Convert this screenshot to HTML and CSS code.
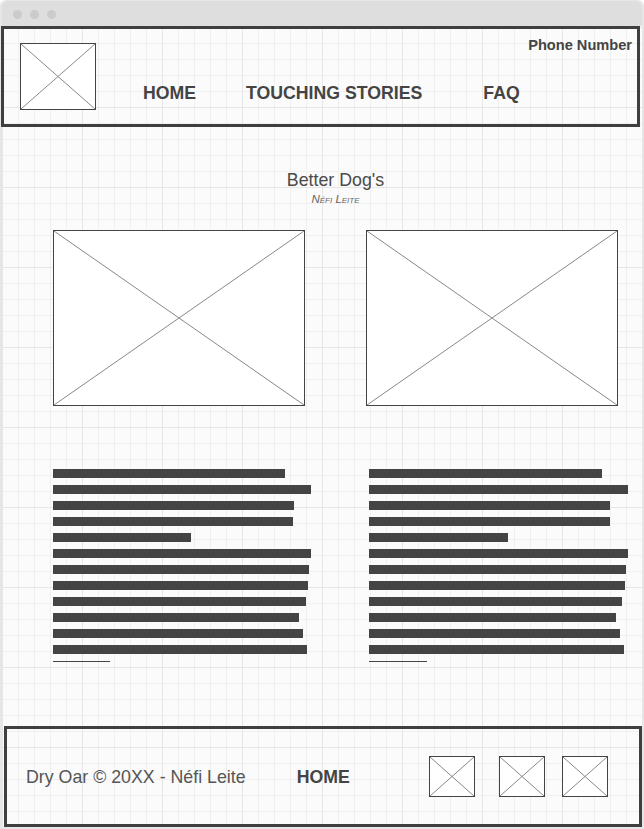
FILE: index.html
```html
<!DOCTYPE html>
<html>
  <head>
    <meta charset="UTF-8" />
    <title>Better Dog's</title>
    <link rel="stylesheet" href="styles.css">
  </head>
  <body>
    <div class="window">
      <div class="titlebar">
        <span class="dot"></span>
        <span class="dot"></span>
        <span class="dot"></span>
      </div>
      <div class="canvas">
        <div class="head">
          <svg class="ph logo" viewBox="0 0 100 100" preserveAspectRatio="none">
            <line x1="0" y1="0" x2="100" y2="100"></line>
            <line x1="100" y1="0" x2="0" y2="100"></line>
          </svg>
          <nav class="nav">
            <a href="#">HOME</a>
            <a href="#" class="stories">TOUCHING STORIES</a>
            <a href="#" class="faq">FAQ</a>
          </nav>
          <span class="phone">Phone Number</span>
        </div>

        <div class="main">
          <h1 class="title">Better Dog's</h1>
          <div class="author">Néfi Leite</div>

          <div class="pictures">
            <svg class="ph" viewBox="0 0 100 100" preserveAspectRatio="none">
              <line x1="0" y1="0" x2="100" y2="100"></line>
              <line x1="100" y1="0" x2="0" y2="100"></line>
            </svg>
            <svg class="ph" viewBox="0 0 100 100" preserveAspectRatio="none">
              <line x1="0" y1="0" x2="100" y2="100"></line>
              <line x1="100" y1="0" x2="0" y2="100"></line>
            </svg>
          </div>

          <div class="texts">
            <div class="lines">
              <span class="bar" style="width: 232px"></span>
              <span class="bar" style="width: 258px"></span>
              <span class="bar" style="width: 241px"></span>
              <span class="bar" style="width: 240px"></span>
              <span class="bar" style="width: 138px"></span>
              <span class="bar" style="width: 258px"></span>
              <span class="bar" style="width: 256px"></span>
              <span class="bar" style="width: 255px"></span>
              <span class="bar" style="width: 253px"></span>
              <span class="bar" style="width: 246px"></span>
              <span class="bar" style="width: 250px"></span>
              <span class="bar" style="width: 254px"></span>
              <span class="rule" style="width: 57px"></span>
            </div>
            <div class="lines right">
              <span class="bar" style="width: 233px"></span>
              <span class="bar" style="width: 259px"></span>
              <span class="bar" style="width: 241px"></span>
              <span class="bar" style="width: 241px"></span>
              <span class="bar" style="width: 139px"></span>
              <span class="bar" style="width: 259px"></span>
              <span class="bar" style="width: 257px"></span>
              <span class="bar" style="width: 256px"></span>
              <span class="bar" style="width: 253px"></span>
              <span class="bar" style="width: 247px"></span>
              <span class="bar" style="width: 251px"></span>
              <span class="bar" style="width: 255px"></span>
              <span class="rule" style="width: 58px"></span>
            </div>
          </div>
        </div>

        <div class="foot">
          <span class="copy">Dry Oar © 20XX - Néfi Leite</span>
          <a href="#" class="foot-home">HOME</a>
          <svg class="ph social first" viewBox="0 0 100 100" preserveAspectRatio="none">
            <line x1="0" y1="0" x2="100" y2="100"></line>
            <line x1="100" y1="0" x2="0" y2="100"></line>
          </svg>
          <svg class="ph social second" viewBox="0 0 100 100" preserveAspectRatio="none">
            <line x1="0" y1="0" x2="100" y2="100"></line>
            <line x1="100" y1="0" x2="0" y2="100"></line>
          </svg>
          <svg class="ph social third" viewBox="0 0 100 100" preserveAspectRatio="none">
            <line x1="0" y1="0" x2="100" y2="100"></line>
            <line x1="100" y1="0" x2="0" y2="100"></line>
          </svg>
        </div>
      </div>
    </div>
  </body>
</html>
```

FILE: styles.css
```css
:root {
  --ink: #444;
  --frame: #e6e6e6;
  --box: #3f3f3f;
  --grid-minor: #f0f0f0;
  --grid-major: #e6e6e6;
}

* {
  box-sizing: border-box;
}

body {
  margin: 0;
  background: #fff;
  font-family: "Liberation Sans", Arial, sans-serif;
  color: var(--ink);
}

a {
  color: var(--ink);
  text-decoration: none;
}

.window {
  width: 644px;
  height: 829px;
  border: 2px solid var(--frame);
  border-top-width: 1px;
  border-radius: 6px 6px 0 0;
  display: flex;
  flex-direction: column;
}

.titlebar {
  height: 25px;
  background: #dedede;
  border-radius: 5px 5px 0 0;
  display: flex;
  align-items: center;
  gap: 8px;
  padding: 2px 0 0 11px;
  flex-shrink: 0;
}

.dot {
  width: 9px;
  height: 9px;
  border-radius: 50%;
  background: #cbcbcb;
}

.canvas {
  flex: 1;
  display: flex;
  flex-direction: column;
  background-color: #fbfbfb;
  background-image:
    linear-gradient(var(--grid-major) 1px, transparent 1px),
    linear-gradient(90deg, var(--grid-major) 1px, transparent 1px),
    linear-gradient(var(--grid-minor) 1px, transparent 1px),
    linear-gradient(90deg, var(--grid-minor) 1px, transparent 1px);
  background-size: 80px 80px, 80px 80px, 16px 16px, 16px 16px;
  background-position: 0 1px;
}

/* placeholder boxes with a cross */
.ph {
  display: block;
  background: #fff;
  border: 1px solid #444;
  flex-shrink: 0;
}

.ph line {
  stroke: #888;
  stroke-width: 1;
  vector-effect: non-scaling-stroke;
}

.head {
  height: 101px;
  width: 639px;
  margin-left: -1px;
  border: 3px solid var(--box);
  display: flex;
  align-items: flex-start;
  flex-shrink: 0;
}

.logo {
  width: 76px;
  height: 67px;
  margin: 14px 0 0 16px;
}

.nav {
  display: flex;
  margin: 54px 0 0 47px;
}

.nav a {
  font-size: 17.7px;
  line-height: 20px;
  font-weight: bold;
}

.nav .stories {
  margin-left: 50px;
}

.nav .faq {
  margin-left: 61px;
}

.phone {
  margin: 8px 5px 0 auto;
  font-size: 14.6px;
  line-height: 16px;
  font-weight: bold;
}

.main {
  flex: 1;
  width: 565px;
  margin-left: 51px;
  padding-top: 43px;
}

.title {
  margin: 0;
  text-align: center;
  font-size: 17.8px;
  line-height: 20px;
  font-weight: normal;
  color: #4a4a4a;
}

.author {
  margin-top: 3px;
  text-align: center;
  font-size: 11.5px;
  line-height: 12px;
  font-style: italic;
  font-variant: small-caps;
  color: #666;
}

.pictures {
  margin-top: 25px;
  display: grid;
  grid-template-columns: 252px 252px;
  column-gap: 61px;
}

.pictures .ph {
  width: 252px;
  height: 176px;
}

.texts {
  margin-top: 63px;
  display: grid;
  grid-template-columns: 252px 252px;
  column-gap: 61px;
}

.lines {
  display: flex;
  flex-direction: column;
  align-items: flex-start;
  gap: 7px;
}

.lines.right {
  padding-left: 3px;
}

.bar {
  display: block;
  height: 9px;
  background: var(--ink);
}

.rule {
  display: block;
  height: 1px;
  background: var(--ink);
}

.foot {
  height: 101px;
  width: 638px;
  margin: 0 0 0 2px;
  border: 3px solid var(--box);
  display: flex;
  align-items: center;
  padding-left: 19px;
  flex-shrink: 0;
}

.copy {
  font-size: 17.8px;
  line-height: 20px;
  color: #555;
}

.foot-home {
  margin-left: 51px;
  font-size: 17.7px;
  line-height: 20px;
  font-weight: bold;
}

.social {
  width: 46px;
  height: 41px;
}

.social.first {
  margin-left: 79px;
}

.social.second {
  margin-left: 24px;
}

.social.third {
  margin-left: 17px;
}
```
